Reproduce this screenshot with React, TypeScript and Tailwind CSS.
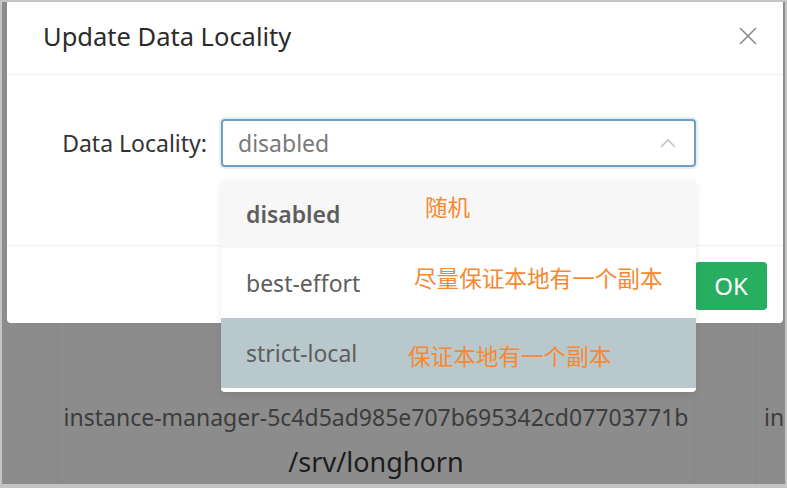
import React from "react";

const ui = "font-['Segoe_UI','Noto_Sans',sans-serif]";
const cjk = "font-['Noto_Sans_CJK_SC',sans-serif]";

const CloseIcon = () => (
  <svg width="18" height="18" viewBox="0 0 18 18" fill="none">
    <path d="M1 1L17 17M17 1L1 17" stroke="#8a8a8a" strokeWidth="1.6" />
  </svg>
);

const ChevronUp = () => (
  <svg width="16" height="10" viewBox="0 0 16 10" fill="none">
    <path d="M1 9L8 2L15 9" stroke="#c2c2c2" strokeWidth="1.6" />
  </svg>
);

const options = [
  { label: "disabled", note: "随机", bold: true, bg: "bg-[#f7f7f7]", h: "h-[68px]", noteTop: "top-[15px]", noteLeft: "left-[204px]" },
  { label: "best-effort", note: "尽量保证本地有一个副本", bold: false, bg: "bg-white", h: "h-[70px]", noteTop: "top-[18px]", noteLeft: "left-[193px]" },
  { label: "strict-local", note: "保证本地有一个副本", bold: false, bg: "bg-[#b8c8cd]", h: "h-[70px]", noteTop: "top-[26px]", noteLeft: "left-[187px]" },
];

const App = () => {
  return (
    <div className={`relative w-[787px] h-[488px] overflow-hidden bg-[#c4c4c4] pt-[2px] pl-[2px] pr-[2px] pb-[4px] ${ui}`}>
      {/* table behind the mask */}
      <div className="h-full w-full bg-[#8c8c8c] flex">
        <div className="w-[56px] border-r border-[#858585]" />
        <div className="w-[637px] border-r border-[#858585] flex flex-col items-center pt-[398px]">
          <div className="text-[23px] leading-[34px] text-[#3c3c3c]">
            instance-manager-5c4d5ad985e707b695342cd07703771b
          </div>
          <div className="mt-[8px] text-[27px] leading-[40px] text-[#1c1c1c]">/srv/longhorn</div>
        </div>
        <div className="w-[62px] border-r border-[#858585]" />
        <div className="flex-1 pl-[7px] pt-[398px] text-[23px] leading-[34px] text-[#3c3c3c] overflow-hidden">in</div>
      </div>

      {/* modal */}
      <div className="absolute left-[7px] top-[2px] w-[776px] h-[321px] bg-white rounded-b-[4px] flex flex-col">
        <div className="h-[73px] shrink-0 flex items-start justify-between pl-[36px] pr-[26px] pt-[19px] border-b border-[#f0f0f0]">
          <div className="text-[25.5px] text-[#2b2b2b] leading-[30px]">Update Data Locality</div>
          <div className="pt-[6px]">
            <CloseIcon />
          </div>
        </div>
        <div className="h-[170px] shrink-0 pt-[44px] flex items-start">
          <div className="w-[200px] h-[48px] flex items-center justify-end text-[23px] text-[#333]">
            Data Locality:
          </div>
          <div className="ml-[14px] w-[475px] h-[48px] rounded-[4px] border-2 border-[#6e9fbf] shadow-[0_0_0_2px_rgba(110,159,191,0.18)] flex items-center justify-between pl-[15px] pr-[18px]">
            <span className="text-[23px] text-[#7a7a7a]">disabled</span>
            <ChevronUp />
          </div>
        </div>
        <div className="flex-1 border-t border-[#f0f0f0] flex justify-end items-start pt-[16px] pr-[16px]">
          <button className="w-[72px] h-[48px] rounded-[4px] bg-[#27ae60] text-white text-[24px]">OK</button>
        </div>
      </div>

      {/* dropdown */}
      <div className="absolute left-[221px] top-[180px] w-[475px] bg-white rounded-[4px] pb-[4px] shadow-[0_3px_8px_rgba(0,0,0,0.08)] overflow-hidden">
        {options.map((o) => (
          <div key={o.label} className={`relative ${o.h} ${o.bg} flex items-center pl-[25px]`}>
            <span className={`text-[23px] text-[#5e5e5e] ${o.bold ? "font-semibold" : ""}`}>{o.label}</span>
            <span className={`absolute ${o.noteLeft} ${o.noteTop} ${cjk} text-[22.6px] leading-[23px] text-[#f7882f]`}>
              {o.note}
            </span>
          </div>
        ))}
      </div>
    </div>
  );
};

export default App;
